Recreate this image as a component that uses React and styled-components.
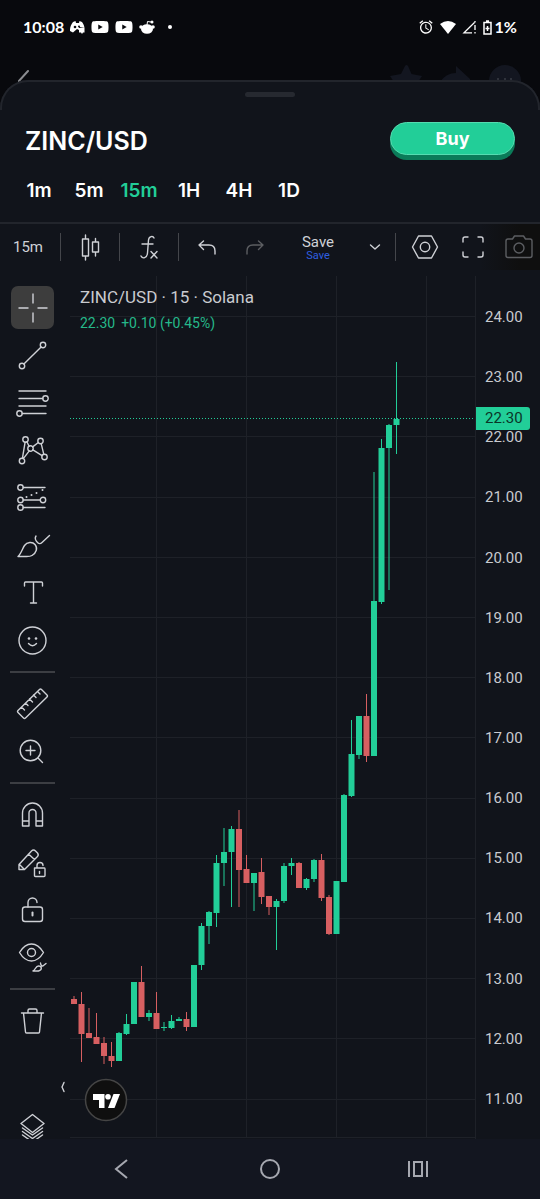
import React from "react";
import styled, { createGlobalStyle } from "styled-components";
import { MdAlarm } from "react-icons/md";
import { FaYoutube } from "react-icons/fa";

const color = {
  backdrop: "#08090d",
  sheet: "#11141b",
  edge: "#22252c",
  grid: "#1e2128",
  divider: "#44464b",
  icon: "#cfd1d6",
  text: "#c9cbd0",
  green: "#22ce98",
  greenDark: "#0b7b59",
  red: "#d75f61",
};

const GlobalStyle = createGlobalStyle`
  *, *::before, *::after { box-sizing: border-box; }
  body { margin: 0; background: ${color.backdrop}; font-family: Roboto, "Liberation Sans", sans-serif; }
  button { margin: 0; padding: 0; border: 0; background: none; color: inherit; font: inherit; cursor: pointer; }
  svg { display: block; }
`;

const Page = styled.div`
  display: flex;
  flex-direction: column;
  min-height: 100vh;
  overflow: hidden;
  background: ${color.backdrop};
`;

const StatusBar = styled.header`
  display: flex;
  align-items: center;
  justify-content: space-between;
  height: 54px;
  padding: 0 23px;
  color: #fff;
  font: 700 16px/20px Lato, sans-serif;
`;

const StatusGroup = styled.div`
  display: flex;
  align-items: center;
  gap: ${(p) => p.$gap}px;
`;

const BehindBar = styled.div`
  display: flex;
  justify-content: space-between;
  height: 26px;
  padding: 0 18px;
`;

const Sheet = styled.main`
  position: relative;
  display: flex;
  flex: 1;
  flex-direction: column;
  padding-top: 12px;
  border-radius: 28px 28px 0 0;
  background: ${color.sheet};

  &::before {
    content: "";
    position: absolute;
    inset: 0 0 auto;
    height: 30px;
    border: 2px solid ${color.edge};
    border-bottom: 0;
    border-radius: 28px 28px 0 0;
    pointer-events: none;
  }
`;

const Grabber = styled.div`
  align-self: center;
  width: 50px;
  height: 5px;
  border-radius: 3px;
  background: #262930;
`;

const PairHeader = styled.div`
  display: flex;
  align-items: center;
  justify-content: space-between;
  height: 38px;
  margin-top: 25px;
  padding: 0 25px;
`;

const PairName = styled.h1`
  margin: 0;
  color: #fff;
  font: 600 25px/38px Inter, sans-serif;
`;

const BuyButton = styled.button`
  align-self: flex-start;
  width: 125px;
  height: 33px;
  border: 1px solid #55dcb0;
  border-radius: 17px;
  background: ${color.green};
  box-shadow: 0 5px 0 ${color.greenDark};
  color: #fff;
  font: 700 18px/30px Inter, sans-serif;
`;

const Timeframes = styled.nav`
  display: flex;
  height: 40px;
  margin: 10px 14px 12px;
`;

const Timeframe = styled.button`
  width: 50px;
  color: ${(p) => (p.$active ? color.green : "#fff")};
  font: 600 19px/42px Inter, sans-serif;
  white-space: nowrap;
`;

const Toolbar = styled.div`
  display: flex;
  align-items: center;
  height: 48px;
  border-top: 2px solid ${color.edge};
  overflow: hidden;
  background: linear-gradient(to left, #0f0f0f 0, #0f0f0f 20px, transparent 60px);
`;

const ToolbarButton = styled.button`
  display: flex;
  flex: none;
  flex-direction: column;
  align-items: center;
  justify-content: center;
  width: ${(p) => p.$width}px;
  height: 46px;
  color: ${(p) => (p.$dim ? "#5c5e62" : color.icon)};
`;

const IntervalText = styled.span`
  padding-right: 4px;
  font-size: 15px;
  line-height: 20px;
`;

const SaveText = styled.span`
  padding-top: 2px;
  font-size: 15px;
  line-height: 16px;
`;

const SaveHint = styled.span`
  color: #2f5fe0;
  font-size: 11px;
  line-height: 12px;
`;

const ToolbarDivider = styled.span`
  flex: none;
  width: 1px;
  height: 28px;
  margin-left: ${(p) => p.$before || 0}px;
  background: ${color.divider};
`;

const Workspace = styled.section`
  position: relative;
  display: flex;
  flex: 1;
`;

const DrawingTools = styled.aside`
  display: flex;
  flex: none;
  flex-direction: column;
  width: 65px;
  height: 869px;
  padding-top: 14px;
  overflow: hidden;
`;

const ToolGroup = styled.div`
  display: grid;
  grid-auto-rows: 1fr;
  flex: none;
  place-items: center;
  height: ${(p) => p.$height}px;
`;

const ToolButton = styled.button`
  display: grid;
  place-items: center;
  width: 43px;
  height: 43px;
  border-radius: 7px;
  background: ${(p) => (p.$active ? "#3d3d3d" : "transparent")};
  color: ${color.icon};
`;

const ToolDivider = styled.div`
  flex: none;
  height: 2px;
  margin: 7px 10px;
  background: #3c3e43;
`;

const LayersSlot = styled.div`
  display: grid;
  justify-items: center;
  height: 33px;
  margin-top: auto;
  overflow: hidden;
`;

const Plot = styled.div`
  position: relative;
  flex: 1;
  min-width: 0;
  margin: 6px 0 0 5px;
`;

const Legend = styled.div`
  position: absolute;
  top: 10px;
  left: 10px;
  white-space: nowrap;
`;

const LegendTitle = styled.h2`
  margin: 0;
  color: ${color.text};
  font-size: 17px;
  font-weight: 400;
  line-height: 22px;
`;

const LegendValues = styled.div`
  display: flex;
  gap: 6px;
  margin-top: 5px;
  color: #25b88a;
  font-size: 14px;
  line-height: 20px;
`;

const LogoBadge = styled.a`
  position: absolute;
  bottom: 17px;
  left: 14px;
`;

const CollapseButton = styled.button`
  position: absolute;
  bottom: 46px;
  left: 57px;
  color: ${color.icon};
`;

const PriceAxis = styled.div`
  position: relative;
  flex: none;
  width: 65px;
  margin-top: 6px;
  padding-top: 11px;
  border-left: 1px solid ${color.grid};
`;

const AxisLabels = styled.div`
  display: grid;
  grid-auto-rows: 1fr;
  align-items: center;
  height: 842px;
  padding-left: 9px;
  color: ${color.text};
  font-size: 15px;
  line-height: 20px;
`;

const LastPrice = styled.div`
  position: absolute;
  top: 131px;
  left: 0;
  width: 54px;
  padding-left: 9px;
  border-radius: 0 3px 3px 0;
  background: ${color.green};
  color: #0a3527;
  font-size: 15px;
  line-height: 23px;
`;

const SystemNav = styled.nav`
  display: grid;
  grid-template-columns: repeat(3, 148px);
  justify-content: center;
  height: 60px;
  background: #131620;
  color: #a6a8b0;
`;

const SystemButton = styled.button`
  display: grid;
  place-items: center;
`;

/* Line icon on a canvas whose origin is its centre. */
function Icon({ size = 43, weight = 1.4, children }) {
  const half = size / 2;
  return (
    <svg
      width={size}
      height={size}
      viewBox={`${-half} ${-half} ${size} ${size}`}
      fill="none"
      stroke="currentColor"
      strokeWidth={weight}
      strokeLinecap="round"
      strokeLinejoin="round"
      aria-hidden="true"
    >
      {children}
    </svg>
  );
}

const Dot = ({ x, y, r = 1 }) => <circle cx={x} cy={y} r={r} fill="currentColor" stroke="none" />;
const Ring = ({ x, y, r = 2.7 }) => <circle cx={x} cy={y} r={r} />;

const tools = [
  {
    height: 380,
    items: [
      ["Crosshair", <path d="M.5-14V-4M.5 5V15M-14 .5H-4M5 .5H15" strokeLinecap="butt" />],
      ["Trend line", <><Ring x={10.5} y={-10.5} /><Ring x={-10.5} y={10.5} /><path d="M-8.6 8.6L8.6-8.6" /></>],
      ["Fib retracement", <><path d="M-13.5-11.5H13.5M-13.5-4H10.3M-13.5 3.5H13.5M-10.3 11H13.5" /><Ring x={13} y={-4} /><Ring x={-13} y={11} /></>],
      ["Pattern", <><Ring x={-7} y={-11} /><Ring x={8} y={-9.5} /><Ring x={-2} y={-2} /><Ring x={-10.5} y={10.5} /><Ring x={12} y={6.5} /><path d="M-10.1 7.8L-7.4-8.3M-5.6-8.7L-3.4-4.3M-3.2.4L-9.2 8.1M.2-3.6L5.8-8M8.7-6.8L11.3 3.9M.4-.7L9.6 5.2" /></>],
      ["Position", <><Ring x={-12} y={-10} /><Ring x={-12} y={2.5} /><Ring x={10.5} y={2.5} /><Ring x={-12} y={10} /><path d="M-9.3-10H12.5M-9.3 2.5H7.8M-9.3 10H12.5" /><Dot x={-6} y={-0.5} /><Dot x={-1} y={-2.5} /><Dot x={4} y={-4.5} /><Dot x={10} y={-7.5} /></>],
      ["Brush", <path d="M-14.5 11C-11.5 8.5-10 3-8 0C-5.5-3.5 0-4 2.5-1C5.5 2.5 4 7-.5 10C-2 11-4 11-6 11ZM3.5-9.5C1.5-6.5 3.5-4.5 5-3C6.5-1.5 8-1.5 9.5-3L17-10" />],
      ["Text", <path d="M-8-6.5V-9.5Q-8-10.5-7-10.5H9Q10-10.5 10-9.5V-6.5M1-10.5V10.5M-2 10.5H4" />],
      ["Emoji", <><circle r="13.5" /><Dot x={-3.5} y={-2} r={1.3} /><Dot x={3.5} y={-2} r={1.3} /><path d="M-4 3Q0 7.5 4 3" /></>],
    ],
  },
  {
    height: 95,
    items: [
      ["Measure", <path d="M7-14Q8-15 9-14L14.5-8.5Q15.5-7.5 14.5-6.5L-7 14.5Q-8 15.5-9 14.5L-14.5 9Q-15.5 8-14.5 7ZM-11 3.5L-8 6.5M-7-.5L-4.5 2M-3-4.5L0-1.5M1-8.5L3.5-6M5-12L7.5-9.5" />],
      ["Zoom in", <><circle cx="-2" cy="-1" r="10.3" /><path d="M5.5 6.5L10 11M-6.5-1H2.5M-2-5.5V3.5" /></>],
    ],
  },
  {
    height: 190,
    items: [
      ["Magnet", <path d="M-10 11.5V-1.5a10 10 0 0 1 20 0V11.5H3.5V-1.5a3.5 3.5 0 0 0-7 0V11.5ZM-10 6.5H-3.5M3.5 6.5H10" />],
      ["Stay in drawing mode", <><path d="M-13.5 7V2L-1-11.5Q1-13.5 3-11.5L5-9.5Q6.5-7.5 5-6L-8 7ZM-4-8.5L2-3M-13 2L-8 7M2 5.5H12Q12.5 5.5 12.5 6.5V13Q12.5 14 11.5 14H3Q2 14 2 13ZM4.5 5.5V3A3 3 0 0 1 10.5 3" /><path d="M7 9V11" /></>],
      ["Lock drawings", <><rect x="-10" y="-2.5" width="20" height="14.5" rx="2.5" /><path d="M-4.5-2.5V-7A4.5 4.5 0 0 1 4.5-7" /><path d="M0 3V6" strokeWidth="2" /></>],
      ["Hide drawings", <><path d="M-13-5C-10-10-6-13.5-1-13.5S8-10 11-5C8 0 4 3.5-1 3.5S-10 0-13-5ZM.5 13.5C3 12.5 3 8.5 6 8.5C9.5 8.5 10 12.5 6 13.5ZM8 5.5C8 8 10 9 11 8L13.5 6" /><circle cx="-1" cy="-5" r="4" /></>],
    ],
  },
  {
    height: 47,
    items: [["Remove", <path d="M-11-7.5H11M-4.5-7.5V-10Q-4.5-11.5-3-11.5H3Q4.5-11.5 4.5-10V-7.5M-9-7.5L-7 11.5Q-7 12.5-6 12.5H6Q7 12.5 7 11.5L9-7.5" />]],
  },
];

/* [high, body top, body bottom, low, rising], measured down the price scale. */
const candles = [
  [996, 999, 1004, 1004, 0], [992, 1004, 1034, 1062, 0], [1008, 1033, 1038, 1038, 0], [1013, 1037, 1044, 1044, 0],
  [1037, 1043, 1056, 1064, 0], [1042, 1056, 1061, 1067, 0], [1032, 1033, 1061, 1061, 1], [1014, 1024, 1034, 1035, 1],
  [982, 982, 1024, 1024, 1], [966, 982, 1017, 1017, 0], [1010, 1013, 1017, 1021, 1], [992, 1013, 1029, 1029, 0],
  [1022, 1027, 1028, 1031, 1], [1015, 1021, 1028, 1029, 1], [1017, 1019, 1021, 1021, 1], [1012, 1019, 1027, 1031, 0],
  [965, 965, 1027, 1027, 1], [923, 926, 965, 970, 1], [911, 912, 926, 944, 1], [855, 863, 913, 927, 1],
  [828, 852, 863, 886, 1], [826, 829, 852, 907, 1], [810, 829, 870, 907, 0], [855, 869, 883, 883, 0],
  [873, 873, 883, 911, 1], [858, 872, 897, 904, 0], [896, 896, 907, 915, 0], [899, 901, 907, 950, 1],
  [863, 866, 901, 903, 1], [858, 863, 866, 875, 1], [862, 863, 888, 888, 0], [878, 879, 888, 890, 1],
  [859, 860, 879, 882, 1], [854, 860, 898, 901, 0], [895, 897, 934, 935, 0], [881, 881, 934, 934, 1],
  [794, 795, 882, 882, 1], [720, 754, 796, 797, 1], [716, 716, 755, 759, 1], [694, 716, 756, 762, 0],
  [472, 601, 756, 756, 1], [439, 448, 602, 604, 1], [424, 425, 448, 590, 1], [362, 419, 425, 454, 1],
];

const SCALE_TOP = 276;
const CANDLE_STEP = 7.5;
const PRICE_STEP = 60.2;
const prices = Array.from({ length: 14 }, (_, i) => (24 - i).toFixed(2));

function CandleChart() {
  return (
    <svg width="100%" height="862" role="img" aria-label="ZINC/USD 15 minute candles">
      <g fill={color.grid}>
        {prices.map((p, i) => (
          <rect key={p} x="0" y={Math.round(40 + i * PRICE_STEP)} width="100%" height="1" />
        ))}
        {[86, 176, 266, 356].map((x) => (
          <rect key={x} x={x} y="0" width="1" height="861" />
        ))}
        <rect x="0" y="861" width="100%" height="1" />
      </g>
      <line x1="0" x2="100%" y1="142.5" y2="142.5" stroke={color.green} strokeDasharray="1 2" />
      {candles.map(([high, top, bottom, low, rising], i) => {
        const x = 4 + i * CANDLE_STEP;
        return (
          <g key={i} fill={rising ? color.green : color.red}>
            <rect x={x - 0.5} y={high - SCALE_TOP} width="1" height={low - high} />
            <rect x={x - 3} y={top - SCALE_TOP} width="6" height={bottom - top} />
          </g>
        );
      })}
    </svg>
  );
}

function StatusIcons() {
  return (
    <StatusBar>
      <StatusGroup $gap={6}>
        <span>10:08</span>
        <svg width="15" height="13" viewBox="0 0 15 13" fill="#fff" aria-hidden="true">
          <path d="M3 1L5.5 0L6 2H9L9.5 0L12 1C13.5 3 14.300 5 14.5 7L9 6V9L7 8L5 9.7L3 11.5L0 10C-.2 6.5 1 3.5 3 1Z" />
          <circle cx="5" cy="6" r="1.3" fill={color.backdrop} />
          <circle cx="9" cy="5.5" r="1" fill={color.backdrop} />
          <path d="M9 7H14.5V11.5H13L12 13L11 11.5H9Z" />
        </svg>
        <FaYoutube size={18} />
        <FaYoutube size={18} />
        <svg width="16" height="14" viewBox="0 0 16 14" aria-hidden="true">
          <ellipse cx="8" cy="9" rx="6" ry="4.8" fill="#fff" />
          <circle cx="2" cy="7" r="1.8" fill="#fff" />
          <circle cx="14" cy="7" r="1.8" fill="#fff" />
          <path d="M8 5L8.5 1.5L12 2" fill="none" stroke="#fff" />
          <circle cx="13" cy="2" r="1.5" fill="#fff" />
        </svg>
        <svg width="26" height="4" viewBox="0 0 26 4" aria-hidden="true">
          <circle cx="9" cy="2" r="2" fill="#fff" />
        </svg>
      </StatusGroup>
      <StatusGroup $gap={6}>
        <MdAlarm size={16} />
        <svg width="16" height="13" viewBox="0 0 16 13" fill="#fff" aria-hidden="true">
          <path d="M0 3Q8-3 16 3L8 13Z" />
        </svg>
        <svg width="15" height="14" viewBox="0 0 15 14" fill="none" stroke="#fff" strokeWidth="1.3" aria-hidden="true">
          <path d="M10 12.8H2L12.5 2.5M13 1V2.5M13 5V10M13 12V13.5" />
        </svg>
        <StatusGroup $gap={3}>
          <svg width="9" height="15" viewBox="0 0 9 15" fill="none" stroke="#fff" strokeWidth="1.5" aria-hidden="true">
            <path d="M1 2.5H8V14H1ZM3 1H6M4.5 6V11M2.5 8.5H6.5" />
          </svg>
          <span>1%</span>
        </StatusGroup>
      </StatusGroup>
    </StatusBar>
  );
}

export default function App() {
  return (
    <>
      <GlobalStyle />
      <Page>
        <StatusIcons />
        <BehindBar aria-hidden="true">
          <svg width="20" height="28" viewBox="0 0 20 28" fill="none" stroke="#8b8c90" strokeWidth="2">
            <path d="M0 28L10 17" strokeLinecap="round" />
          </svg>
          <svg width="132" height="28" viewBox="0 0 132 28" fill="#131620">
            <path d="M15 12Q16.5 10 18 12L21.5 20L32 22L28 28H4L0 22L11 20Z" />
            <path d="M66 12L80 25V28H50Q56 19 66 19Z" />
            <circle cx="115" cy="27" r="16" />
            <g fill="#3a3d45">
              <circle cx="108" cy="25" r="1" />
              <circle cx="115" cy="25" r="1" />
              <circle cx="121" cy="25" r="1" />
            </g>
          </svg>
        </BehindBar>
        <Sheet>
          <Grabber />
          <PairHeader>
            <PairName>ZINC/USD</PairName>
            <BuyButton>Buy</BuyButton>
          </PairHeader>
          <Timeframes aria-label="Timeframe">
            {["1m", "5m", "15m", "1H", "4H", "1D"].map((t) => (
              <Timeframe key={t} $active={t === "15m"}>{t}</Timeframe>
            ))}
          </Timeframes>
          <Toolbar>
            <ToolbarButton $width={60}><IntervalText>15m</IntervalText></ToolbarButton>
            <ToolbarDivider />
            <ToolbarButton $width={58} aria-label="Candles">
              <Icon size={32}><path d="M-7.500-8H-1.500V9H-7.500ZM-4.500-12V-8M-4.500 9V13M2.500-5H8.500V5H2.500ZM5.500-8.500V-5M5.500 5V9" /></Icon>
            </ToolbarButton>
            <ToolbarDivider />
            <ToolbarButton $width={58} aria-label="Indicators">
              <Icon size={32}><path d="M5-9C4-11.5 0-11-.5-7L-1.5 6C-2 11.5-6.5 12-8 9M-7-3H4M2 4.5L8 11M8 4.5L2 11" /></Icon>
            </ToolbarButton>
            <ToolbarDivider />
            <ToolbarButton $width={56} aria-label="Undo">
              <Icon size={32}><path d="M-3.5-6L-8-2L-3.5 2.5M-8-2H2Q8-2 8 4V7" /></Icon>
            </ToolbarButton>
            <ToolbarButton $width={40} $dim aria-label="Redo">
              <Icon size={32}><path d="M3.5-6L8-2L3.5 2.5M8-2H-2Q-8-2-8 4V7" /></Icon>
            </ToolbarButton>
            <ToolbarButton $width={86}>
              <SaveText>Save</SaveText>
              <SaveHint>Save</SaveHint>
            </ToolbarButton>
            <ToolbarButton $width={28} aria-label="Save options">
              <Icon size={28}><path d="M-4.5-2L0 2L4.5-2" /></Icon>
            </ToolbarButton>
            <ToolbarDivider $before={6} />
            <ToolbarButton $width={58} aria-label="Settings">
              <Icon size={32}><path d="M-6.5-11H6.5L12.5 0L6.5 11H-6.5L-12.5 0Z" /><circle r="4.7" /></Icon>
            </ToolbarButton>
            <ToolbarButton $width={38} aria-label="Fullscreen">
              <Icon size={32}><path d="M-10-5V-8Q-10-10-8-10H-5M5-10H8Q10-10 10-8V-5M10 5V8Q10 10 8 10H5M-5 10H-8Q-10 10-10 8V5" /></Icon>
            </ToolbarButton>
            <ToolbarButton $width={54} $dim aria-label="Snapshot">
              <Icon size={32}><path d="M-11-8H-6.5L-4.5-11H4.5L6.5-8H11Q13-8 13-6V8.5Q13 10.5 11 10.5H-11Q-13 10.5-13 8.5V-6Q-13-8-11-8Z" /><circle cy="1" r="5" /></Icon>
            </ToolbarButton>
          </Toolbar>
          <Workspace>
            <DrawingTools aria-label="Drawing tools">
              {tools.map((group, g) => (
                <React.Fragment key={g}>
                  {g > 0 && <ToolDivider />}
                  <ToolGroup $height={group.height}>
                    {group.items.map(([name, drawing]) => (
                      <ToolButton key={name} aria-label={name} $active={name === "Crosshair"}>
                        <Icon>{drawing}</Icon>
                      </ToolButton>
                    ))}
                  </ToolGroup>
                </React.Fragment>
              ))}
              <LayersSlot>
                <ToolButton aria-label="Object tree">
                  <Icon><path d="M0-13L11.5-4L0 5L-11.5-4ZM-10 .5L0 7.5L10 .5M-10 4L0 11L10 4M-10 7.5L0 14.5L10 7.5" /></Icon>
                </ToolButton>
              </LayersSlot>
            </DrawingTools>
            <Plot>
              <CandleChart />
              <Legend>
                <LegendTitle>ZINC/USD · 15 · Solana</LegendTitle>
                <LegendValues><span>22.30</span><span>+0.10 (+0.45%)</span></LegendValues>
              </Legend>
              <LogoBadge href="#tradingview" aria-label="TradingView">
                <svg width="44" height="44" viewBox="-22 -22 44 44" aria-hidden="true">
                  <circle r="20.5" fill="#0f0f0f" stroke="#454545" strokeWidth="1.5" />
                  <g fill="#fff">
                    <path d="M-13-6H-1.5V8H-7V0H-13Z" />
                    <circle cx="2" cy="-3.2" r="2.8" />
                    <path d="M7.5-6H14L8.5 8H2Z" />
                  </g>
                </svg>
              </LogoBadge>
            </Plot>
            <PriceAxis>
              <AxisLabels>
                {prices.map((p) => <span key={p}>{p}</span>)}
              </AxisLabels>
              <LastPrice>22.30</LastPrice>
            </PriceAxis>
            <CollapseButton aria-label="Collapse tools">
              <Icon size={12}><path d="M1-4.5L-1 0L1 4.5" /></Icon>
            </CollapseButton>
          </Workspace>
        </Sheet>
        <SystemNav aria-label="System">
          <SystemButton aria-label="Back">
            <Icon size={24} weight={2}><path d="M5-9L-6 0L5 9" strokeLinecap="butt" strokeLinejoin="miter" /></Icon>
          </SystemButton>
          <SystemButton aria-label="Home"><Icon size={24} weight={2}><circle r="9" /></Icon></SystemButton>
          <SystemButton aria-label="Recent apps">
            <Icon size={24} weight={2}><path d="M-9-8V8M9-8V8M-4-7H4V7H-4Z" strokeLinecap="butt" strokeLinejoin="miter" /></Icon>
          </SystemButton>
        </SystemNav>
      </Page>
    </>
  );
}
